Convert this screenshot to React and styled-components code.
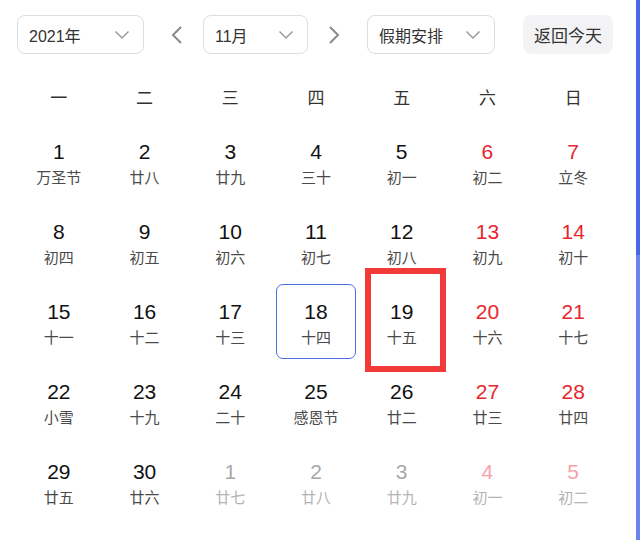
import React from "react";
import styled, { createGlobalStyle } from "styled-components";

const GlobalStyle = createGlobalStyle`
  html, body {
    margin: 0;
    padding: 0;
    background: #fff;
  }
  body {
    font-family: "Liberation Sans", "Noto Sans CJK SC", sans-serif;
  }
`;

const Page = styled.div`
  display: flex;
  width: 640px;
  height: 540px;
  overflow: hidden;
  background: #fff;
`;

const Main = styled.div`
  width: 636px;
  padding: 15px 0 0 16px;
  box-sizing: border-box;
`;

// blue strip on the right edge
const EdgeBar = styled.div`
  width: 4px;
  height: 540px;
  background: linear-gradient(to bottom, #4b66e6 0, #4b66e6 255px, #6c84f0 255px, #6c84f0 100%);
`;

const Toolbar = styled.div`
  display: flex;
  align-items: center;
  height: 39px;
  padding-left: 1px;
`;

const Select = styled.div`
  display: flex;
  align-items: center;
  justify-content: space-between;
  width: ${(p) => p.$w}px;
  height: 39px;
  box-sizing: border-box;
  padding: 0 13px 0 11px;
  border: 1px solid #dcdde2;
  border-radius: 8px;
  font-size: 16px;
  color: #333;
  font-family: "Liberation Sans", "Noto Sans CJK SC", sans-serif;
`;

const NavArrow = styled.div`
  display: flex;
  align-items: center;
  justify-content: center;
  width: 24px;
  height: 39px;
  margin: ${(p) => (p.$left ? "0 14px 0 21px" : "0 21px 0 14px")};
`;

const TodayButton = styled.div`
  display: flex;
  align-items: center;
  justify-content: center;
  width: 90px;
  height: 39px;
  margin-left: 28px;
  border-radius: 8px;
  background: #f3f3f5;
  font-size: 17px;
  color: #333;
  font-family: "Noto Sans CJK SC", sans-serif;
`;

const Grid = styled.div`
  display: grid;
  grid-template-columns: repeat(7, 1fr);
  width: 600px;
`;

const WeekHead = styled(Grid)`
  margin-top: 24px;
  height: 36px;
  align-items: center;
`;

const WeekDay = styled.div`
  text-align: center;
  font-size: 17px;
  color: #333;
  font-family: "Noto Sans CJK SC", sans-serif;
`;

const Days = styled(Grid)`
  margin-top: 8px;
  grid-auto-rows: 80px;
`;

const Cell = styled.div`
  position: relative;
  width: 80px;
  height: 75px;
  margin: 2px auto 0;
  box-sizing: border-box;
  display: flex;
  flex-direction: column;
  align-items: center;
  padding-top: 15px;
  border: 1.5px solid ${(p) => (p.$selected ? "#4a6ee0" : "transparent")};
  border-radius: 7px;
`;

const Num = styled.div`
  font-size: 21px;
  line-height: 24px;
  color: ${(p) =>
    p.$muted ? (p.$weekend ? "#f4a3ab" : "#a8a8a8") : p.$weekend ? "#e8262d" : "#111"};
`;

const Lunar = styled.div`
  margin-top: 3px;
  font-size: 15px;
  line-height: 19px;
  font-family: "Noto Sans CJK SC", sans-serif;
  color: ${(p) => (p.$muted ? "#b4b4b4" : "#4a4a4a")};
`;

// red annotation frame drawn over the 19th
const Highlight = styled.div`
  position: absolute;
  left: 2.5px;
  top: -17.5px;
  width: 81px;
  height: 104px;
  box-sizing: border-box;
  border: 6px solid #f23a3a;
  pointer-events: none;
`;

const Chevron = () => (
  <svg width="16" height="10" viewBox="0 0 16 10">
    <polyline points="1.5,1.5 8,8 14.5,1.5" fill="none" stroke="#9a9a9a" strokeWidth="1.5" />
  </svg>
);

const Arrow = ({ dir }) => (
  <svg width="12" height="20" viewBox="0 0 12 20">
    <polyline
      points={dir === "left" ? "10,2 2,10 10,18" : "2,2 10,10 2,18"}
      fill="none"
      stroke="#8a8a8a"
      strokeWidth="2"
    />
  </svg>
);

const weekDays = ["一", "二", "三", "四", "五", "六", "日"];

const lunar = [
  "万圣节", "廿八", "廿九", "三十", "初一", "初二", "立冬",
  "初四", "初五", "初六", "初七", "初八", "初九", "初十",
  "十一", "十二", "十三", "十四", "十五", "十六", "十七",
  "小雪", "十九", "二十", "感恩节", "廿二", "廿三", "廿四",
  "廿五", "廿六", "廿七", "廿八", "廿九", "初一", "初二",
];

const days = lunar.map((l, i) => {
  const muted = i >= 30;
  return {
    num: muted ? i - 29 : i + 1,
    lunar: l,
    muted,
    weekend: i % 7 >= 5,
  };
});

export default function App() {
  return (
    <Page>
      <GlobalStyle />
      <Main>
        <Toolbar>
          <Select $w={127}>
            2021年
            <Chevron />
          </Select>
          <NavArrow $left>
            <Arrow dir="left" />
          </NavArrow>
          <Select $w={105}>
            11月
            <Chevron />
          </Select>
          <NavArrow>
            <Arrow dir="right" />
          </NavArrow>
          <Select $w={128}>
            假期安排
            <Chevron />
          </Select>
          <TodayButton>返回今天</TodayButton>
        </Toolbar>

        <WeekHead>
          {weekDays.map((d) => (
            <WeekDay key={d}>{d}</WeekDay>
          ))}
        </WeekHead>

        <Days>
          {days.map((d, i) => (
            <Cell key={i} $selected={!d.muted && d.num === 18}>
              <Num $muted={d.muted} $weekend={d.weekend}>
                {d.num}
              </Num>
              <Lunar $muted={d.muted}>{d.lunar}</Lunar>
              {!d.muted && d.num === 19 && <Highlight />}
            </Cell>
          ))}
        </Days>
      </Main>
      <EdgeBar />
    </Page>
  );
}
